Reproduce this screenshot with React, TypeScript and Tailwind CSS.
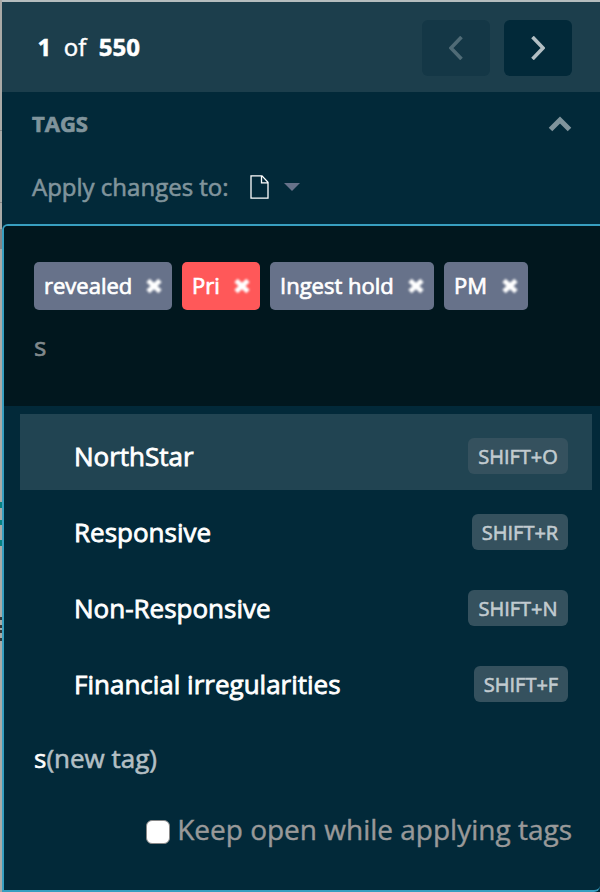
import React from "react";

const tags = [
  { name: "revealed", box: "w-[138px] bg-[#67728a]" },
  { name: "Pri", box: "w-[78px] bg-[#ff5859]" },
  { name: "Ingest hold", box: "w-[164px] bg-[#67728a]" },
  { name: "PM", box: "w-[84px] bg-[#67728a]" },
];

const options = [
  { name: "NorthStar", keys: "SHIFT+O", row: "bg-[#214452]", badge: "w-[100px]" },
  { name: "Responsive", keys: "SHIFT+R", row: "", badge: "w-[96px]" },
  { name: "Non-Responsive", keys: "SHIFT+N", row: "", badge: "w-[100px]" },
  { name: "Financial irregularities", keys: "SHIFT+F", row: "", badge: "w-[94px]" },
];

function RemoveIcon() {
  return (
    <svg className="h-4 w-4 shrink-0 blur-[0.9px]" viewBox="0 0 16 16" fill="none" stroke="#fff" strokeWidth="4.800">
      <path d="M2 2.4 14 13.6M14 2.4 2 13.6" />
    </svg>
  );
}

// Sliver of the page that lies behind the panel.
function PageEdge() {
  return (
    <div className="flex w-[2px] shrink-0 flex-col bg-[#aaaaa7]">
      <i className="mt-[130px] h-px bg-[#858585]" />
      <i className="mt-[71px] h-px bg-[#858585]" />
      <i className="mt-[26px] h-5 bg-[#858587]" />
      <i className="mt-[253px] h-[6px] bg-[#078080]" />
      <i className="mt-[12px] h-[5px] bg-[#078080]" />
      <i className="mt-[15px] h-[6px] bg-[#078080]" />
      <i className="mt-[71px] h-[3px] bg-[#333]" />
      <i className="mt-[5px] h-[3px] bg-[#333]" />
      <i className="mt-[2px] h-[3px] bg-[#333]" />
      <i className="mt-[5px] h-[3px] bg-[#333]" />
    </div>
  );
}

export default function App() {
  return (
    <div className="flex h-[892px] w-[600px] overflow-hidden bg-[#022939] font-['Open_Sans',sans-serif] whitespace-nowrap">
      <PageEdge />
      <main className="flex min-w-0 flex-1 flex-col">
        <header className="flex h-[92px] shrink-0 items-center justify-between border-t-2 border-[#b5bdbe] bg-[#1c3e4c] pr-7 pl-[35.500px]">
          <p className="flex gap-[12.5px] text-2xl text-white [-webkit-text-stroke:0.5px_currentColor]">
            <b>1</b>
            <span>of</span>
            <b>550</b>
          </p>
          <div className="flex gap-[14px] pt-[2px]">
            <button className="flex h-14 w-[68px] items-center justify-center rounded-md bg-[#143746]">
              <svg className="h-6 w-[14px]" viewBox="0 0 14 24" fill="none" stroke="#506b76" strokeWidth="3.6">
                <path d="M12.5 1 2 12l10.500 11" />
              </svg>
            </button>
            <button className="flex h-14 w-[68px] items-center justify-center rounded-md bg-[#022939]">
              <svg className="h-6 w-[14px]" viewBox="0 0 14 24" fill="none" stroke="#b3bfc4" strokeWidth="3.6">
                <path d="M1.500 1 12 12 1.500 23" />
              </svg>
            </button>
          </div>
        </header>

        <section className="h-[132px] shrink-0 pr-7 pl-[30px] text-[#80949c]">
          <div className="flex h-16 items-center justify-between">
            <h2 className="pb-px text-[22px] font-bold [-webkit-text-stroke:0.7px_currentColor]">TAGS</h2>
            <svg className="h-4 w-6" viewBox="0 0 24 16" fill="none" stroke="#80949c" strokeWidth="5">
              <path d="M2.500 13.500 12 4l9.500 9.500" />
            </svg>
          </div>
          <div className="flex h-[62px] items-center">
            <span className="text-2xl [-webkit-text-stroke:0.6px_currentColor]">Apply changes to:</span>
            <svg className="ml-[21px] h-6 w-[19px]" viewBox="0 0 19 24" fill="none" stroke="#fff" strokeWidth="1.300">
              <path d="M1 .8h11l6 6.500v15.900H1zM11.500.8v7H18" />
            </svg>
            <svg className="ml-[15px] h-2 w-4" viewBox="0 0 16 8" fill="#67728a">
              <path d="M0 0h16L8 8z" />
            </svg>
          </div>
        </section>

        <section className="flex flex-1 flex-col overflow-hidden rounded-tl-md rounded-br-md border-2 border-r-0 border-[#389fc0]">
          <div className="h-[180px] bg-[#01171e] px-[30px] pt-9">
            <div className="flex gap-[10px]">
              {tags.map((tag) => (
                <div key={tag.name} className={`flex h-12 items-center justify-between rounded-[5px] px-[10px] text-[22px] text-white ${tag.box}`}>
                  <span className="pb-[2px] [-webkit-text-stroke:0.7px_currentColor]">{tag.name}</span>
                  <RemoveIcon />
                </div>
              ))}
            </div>
            <p className="mt-[18px] text-[26px] leading-9 text-[#80898c] [-webkit-text-stroke:0.6px_currentColor]">s</p>
          </div>

          <ul className="mt-2 mr-2 ml-4">
            {options.map((option) => (
              <li key={option.name} className={`flex h-[76px] items-center justify-between pt-2 pr-6 pl-[54px] ${option.row}`}>
                <span className="text-[26px] text-white [-webkit-text-stroke:0.8px_currentColor]">{option.name}</span>
                <kbd className={`flex h-9 items-center justify-center rounded-md bg-[#35515e] pt-[2px] font-['Open_Sans',sans-serif] text-xl text-[#c2cbd0] [-webkit-text-stroke:0.6px_currentColor] ${option.badge}`}>
                  {option.keys}
                </kbd>
              </li>
            ))}
          </ul>

          <p className="mt-[22px] pl-[30px] text-[26px] leading-9 text-[#b3bfc4] [-webkit-text-stroke:0.6px_currentColor]">
            <span className="text-white">s</span>(new tag)
          </p>

          <label className="mt-[35px] mr-7 flex items-center justify-end gap-[7px] text-[28px] leading-9 text-[#999]">
            <input type="checkbox" className="mt-[5px] h-6 w-6 appearance-none rounded-[6px] border border-[#888] bg-white" />
            <span className="[-webkit-text-stroke:0.4px_currentColor]">Keep open while applying tags</span>
          </label>
        </section>
      </main>
    </div>
  );
}
